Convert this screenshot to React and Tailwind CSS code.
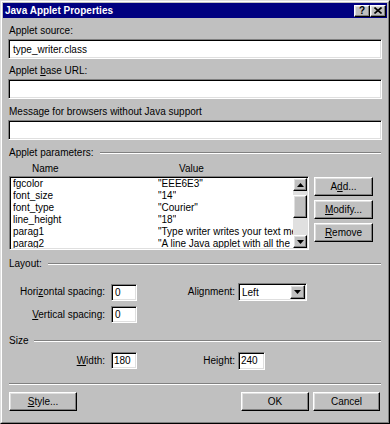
import React from "react";

const raised =
  "bg-[#c0c0c0] border border-t-white border-l-white border-r-black border-b-black shadow-[inset_-1px_-1px_#808080,inset_1px_1px_#dfdfdf]";
const sunken =
  "bg-white border border-t-[#808080] border-l-[#808080] border-r-white border-b-white shadow-[inset_1px_1px_#000,inset_-1px_-1px_#dfdfdf]";

function Group({ children, className = "" }) {
  return (
    <div className={`flex items-center h-[12px] ${className}`}>
      <span className="pl-px pr-[6px] leading-[12px] whitespace-nowrap">{children}</span>
      <div className="flex-1 h-[2px] border-t border-t-[#808080] border-b border-b-white mr-px" />
    </div>
  );
}

function Btn({ children, className = "" }) {
  return (
    <div className={`${raised} flex items-center justify-center leading-[12px] ${className}`}>
      {children}
    </div>
  );
}

function Tri({ down = true }) {
  return (
    <svg width="7" height="4" viewBox="0 0 7 4" className="block">
      {down ? <path d="M0 0h7L3.5 4z" fill="#000" /> : <path d="M0 4h7L3.5 0z" fill="#000" />}
    </svg>
  );
}

const rows = [
  ["fgcolor", '"EEE6E3"'],
  ["font_size", '"14"'],
  ["font_type", '"Courier"'],
  ["line_height", '"18"'],
  ["parag1", '"Type writer writes your text me'],
  ["parag2", '"A line Java applet with all the'],
];

export default function App() {
  return (
    <div className="w-[390px] h-[424px] bg-[#c0c0c0] font-['Liberation_Sans',Arial,sans-serif] text-[10px] text-black">
      <div className="h-full border border-t-[#dfdfdf] border-l-[#dfdfdf] border-r-black border-b-black">
        <div className="h-full border border-t-white border-l-white border-r-[#808080] border-b-[#808080] p-px flex flex-col">
          {/* Title bar */}
          <div className="h-[15px] bg-[#000080] flex items-center pl-[2px] pr-px">
            <span className="flex-1 text-white font-bold leading-[15px]">Java Applet Properties</span>
            <div className="flex">
              <div className={`${raised} w-[16px] h-[12px] flex items-center justify-center font-bold text-[10px] leading-[10px]`}>?</div>
              <div className={`${raised} w-[16px] h-[12px] flex items-center justify-center`}>
                <svg width="8" height="7" viewBox="0 0 8 7" className="block">
                  <path d="M0.5 0.5L7.5 6.5M7.5 0.5L0.5 6.5" stroke="#000" strokeWidth="1.6" />
                </svg>
              </div>
            </div>
          </div>

          {/* Body */}
          <div className="flex flex-col px-[5px]">
            <div className="mt-[7px] pl-px leading-[12px] h-[12px]">Applet source:</div>
            <div className={`${sunken} mt-[2px] h-[20px] pl-[4px] flex items-center`}>type_writer.class</div>

            <div className="mt-[6px] pl-px leading-[12px] h-[12px]">
              Applet <span className="underline">b</span>ase URL:
            </div>
            <div className={`${sunken} mt-[2px] h-[20px]`} />

            <div className="mt-[7px] pl-px leading-[12px] h-[12px]">Message for browsers without Java support</div>
            <div className={`${sunken} mt-[2px] h-[20px]`} />

            <Group className="mt-[7px]">Applet parameters:</Group>

            <div className="flex mt-[4px] h-[12px] leading-[12px]">
              <span className="ml-[24px] w-[147px]">Name</span>
              <span>Value</span>
            </div>

            <div className="flex mt-px">
              <div className={`${sunken} ml-px w-[300px] h-[74px] p-px flex overflow-hidden`}>
                <div className="flex-1 pl-[2px] overflow-hidden">
                  {rows.map(([n, v]) => (
                    <div key={n} className="flex h-[12px] leading-[12px] whitespace-nowrap overflow-hidden">
                      <span className="w-[145px] shrink-0">{n}</span>
                      <span className="overflow-hidden">{v}</span>
                    </div>
                  ))}
                </div>
                <div className="w-[14px] flex flex-col bg-[#e0e0e0]">
                  <div className={`${raised} h-[13px] flex items-center justify-center`}>
                    <Tri down={false} />
                  </div>
                  <div className={`${raised} h-[23px] mt-[4px]`} />
                  <div className="flex-1" />
                  <div className={`${raised} h-[13px] flex items-center justify-center`}>
                    <Tri />
                  </div>
                </div>
              </div>
              <div className="ml-[5px] mt-px flex flex-col gap-[4px]">
                <Btn className="w-[59px] h-[19px]">
                  A<span className="underline">d</span>d...
                </Btn>
                <Btn className="w-[59px] h-[19px]">
                  <span className="underline">M</span>odify...
                </Btn>
                <Btn className="w-[59px] h-[19px]">
                  <span className="underline">R</span>emove
                </Btn>
              </div>
            </div>

            <Group className="mt-[8px]">Layout:</Group>

            <div className="flex items-center mt-[13px] h-[18px]">
              <div className="w-[97px] text-right leading-[12px]">
                Hori<span className="underline">z</span>ontal spacing:
              </div>
              <div className={`${sunken} ml-[6px] w-[26px] h-[17px] pl-[3px] flex items-center`}>0</div>
              <div className="w-[98px] text-right leading-[12px]">Alignment:</div>
              <div className={`${sunken} ml-[3px] w-[69px] h-[18px] p-px flex`}>
                <div className="flex-1 pl-[2px] flex items-center">Left</div>
                <div className={`${raised} w-[15px] h-full flex items-center justify-center`}>
                  <Tri />
                </div>
              </div>
            </div>

            <div className="flex items-center mt-[5px] h-[17px]">
              <div className="w-[97px] text-right leading-[12px]">
                <span className="underline">V</span>ertical spacing:
              </div>
              <div className={`${sunken} ml-[6px] w-[26px] h-[17px] pl-[3px] flex items-center`}>0</div>
            </div>

            <Group className="mt-[12px]">Size</Group>

            <div className="flex items-center mt-[5px] h-[17px]">
              <div className="w-[97px] text-right leading-[12px]">
                <span className="underline">W</span>idth:
              </div>
              <div className={`${sunken} ml-[6px] w-[26px] h-[17px] pl-[2px] flex items-center`}>180</div>
              <div className="w-[98px] text-right leading-[12px]">Height:</div>
              <div className={`${sunken} ml-[3px] w-[27px] h-[18px] pl-[2px] flex items-center`}>240</div>
            </div>

            <div className="mt-[14px] h-[2px] border-t border-t-[#808080] border-b border-b-white ml-px mr-px" />

            <div className="flex mt-[7px] h-[19px]">
              <Btn className="ml-px w-[68px] h-[19px]">
                <span className="underline">S</span>tyle...
              </Btn>
              <div className="flex-1" />
              <Btn className="w-[68px] h-[19px]">OK</Btn>
              <Btn className="ml-[4px] mr-[2px] w-[67px] h-[19px]">Cancel</Btn>
            </div>
          </div>
        </div>
      </div>
    </div>
  );
}
